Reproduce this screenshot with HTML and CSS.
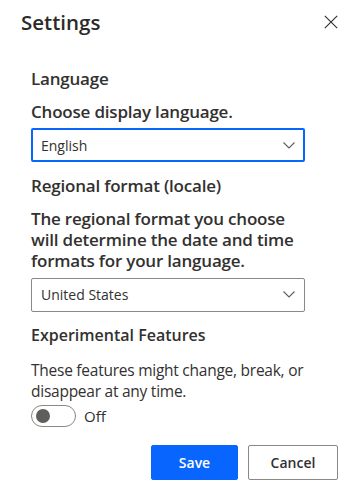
FILE: index.html
```html
<!DOCTYPE html>
<html>
<head>
<meta charset="utf-8">
<link rel="stylesheet" href="styles.css">
</head>
<body>
<div class="panel">
  <div class="header">
    <h1 class="title">Settings</h1>
    <button class="close" aria-label="Close">
      <svg width="14" height="14" viewBox="0 0 14 14"><path d="M0.8 0.8 L13.2 13.2 M13.2 0.8 L0.8 13.2" stroke="#323130" stroke-width="1.15" fill="none"/></svg>
    </button>
  </div>
  <div class="content">
    <div class="section-title">Language</div>
    <div class="label">Choose display language.</div>
    <div class="select focused">
      <span>English</span>
      <svg class="chev" width="12" height="7" viewBox="0 0 12 7"><path d="M0.5 0.5 L6 6 L11.5 0.5" stroke="#605e5c" stroke-width="1.1" fill="none"/></svg>
    </div>
    <div class="section-title">Regional format (locale)</div>
    <div class="label">The regional format you choose will determine the date and time formats for your language.</div>
    <div class="select">
      <span>United States</span>
      <svg class="chev" width="12" height="7" viewBox="0 0 12 7"><path d="M0.5 0.5 L6 6 L11.5 0.5" stroke="#605e5c" stroke-width="1.1" fill="none"/></svg>
    </div>
    <div class="section-title exp">Experimental Features</div>
    <div class="desc">These features might change, break, or disappear at any time.</div>
    <div class="toggle-row">
      <span class="toggle"><span class="knob"></span></span>
      <span class="toggle-label">Off</span>
    </div>
  </div>
  <div class="footer">
    <button class="btn primary">Save</button>
    <button class="btn">Cancel</button>
  </div>
</div>
</body>
</html>
```
FILE: styles.css
```css
* { box-sizing: border-box; }
html, body { margin: 0; padding: 0; background: #fff; }
body {
  font-family: "Open Sans", "Noto Sans", sans-serif;
  color: #323130;
  width: 355px;
  height: 490px;
  overflow: hidden;
}
.header {
  display: flex;
  justify-content: space-between;
  align-items: flex-start;
  padding: 8px 17px 0 21px;
  height: 36px;
}
.title {
  margin: 0;
  font-size: 20.5px;
  font-weight: 600;
  line-height: 28px;
  color: #2b2a29;
}
.close {
  border: none;
  background: none;
  padding: 0;
  margin-top: 7px;
  width: 14px;
  height: 14px;
  display: flex;
}
.content {
  padding: 32px 50px 0 31px;
}
.section-title {
  font-size: 17px;
  font-weight: 600;
  line-height: 22px;
  letter-spacing: -0.2px;
}
.label {
  font-size: 17px;
  font-weight: 600;
  line-height: 21.33px;
  letter-spacing: -0.2px;
  margin-top: 11px;
}
.select {
  display: flex;
  justify-content: space-between;
  align-items: center;
  height: 34px;
  border: 1px solid #8a8886;
  border-radius: 2px;
  padding: 0 9px 0 9px;
  font-size: 14px;
  margin-top: 6px;
}
.select.focused {
  border: 2px solid #0866ff;
  padding: 0 8px 0 8px;
}
.select + .section-title { margin-top: 12.5px; }
.section-title.exp {
  font-size: 16px;
  letter-spacing: 0;
}
.desc {
  font-size: 15.5px;
  line-height: 21px;
  margin-top: 13.5px;
  letter-spacing: -0.25px;
}
.toggle-row {
  display: flex;
  align-items: center;
  gap: 8px;
  margin-top: 3.2px;
}
.toggle {
  width: 45px;
  height: 22px;
  border: 1px solid #8a8886;
  border-radius: 11px;
  display: flex;
  align-items: center;
  padding-left: 4px;
}
.knob {
  width: 14px;
  height: 14px;
  border-radius: 50%;
  background: #605e5c;
}
.toggle-label { font-size: 15px; }
.footer {
  display: flex;
  justify-content: flex-end;
  gap: 10px;
  padding: 18px 17px 0 0;
}
.btn {
  height: 35px;
  width: 90px;
  border: 1px solid #8a8886;
  border-radius: 2px;
  background: #fff;
  color: #323130;
  font-family: inherit;
  font-size: 14px;
  font-weight: 600;
}
.btn.primary {
  width: 87px;
  background: #0866ff;
  border-color: #0866ff;
  color: #fff;
}
```
